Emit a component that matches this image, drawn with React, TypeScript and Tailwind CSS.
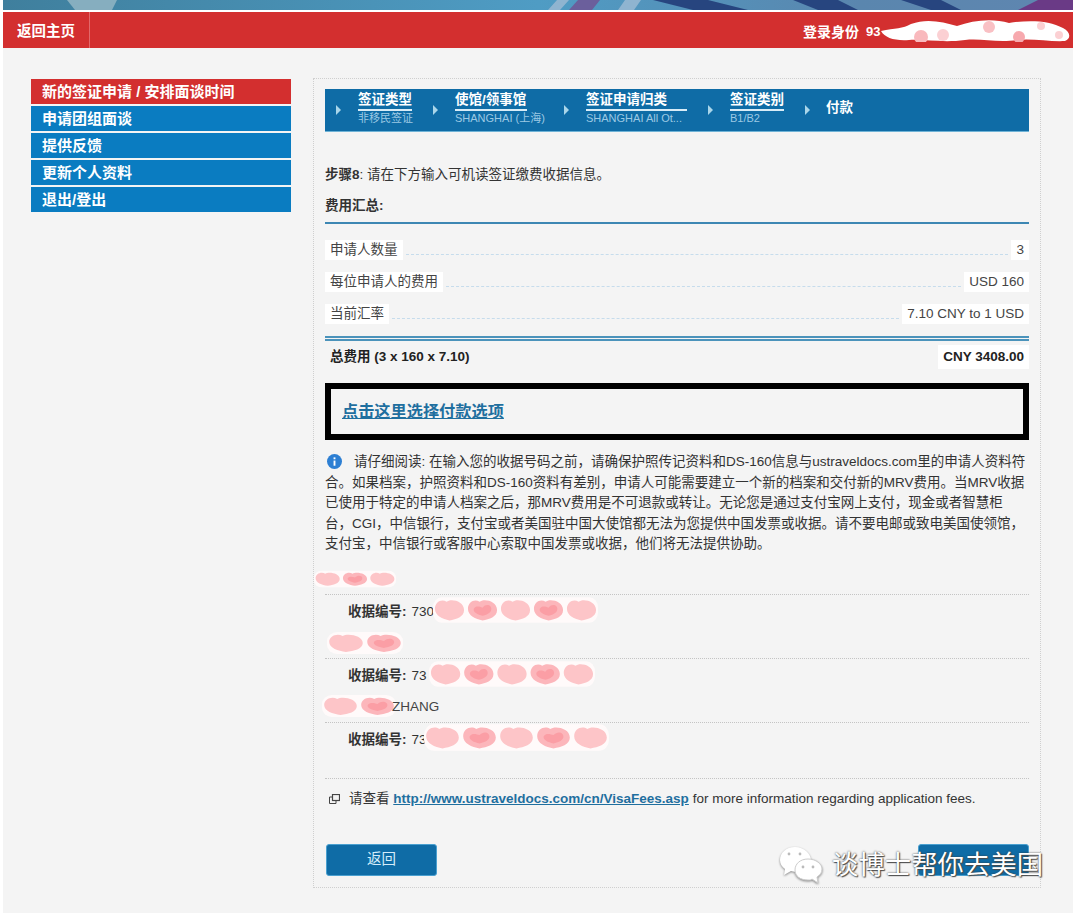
import type { ReactNode } from "react";

const CJK = "font-['Liberation_Sans','Noto_Sans_CJK_SC',sans-serif]";

const MENU = ["新的签证申请 / 安排面谈时间", "申请团组面谈", "提供反馈", "更新个人资料", "退出/登出"];

const STEPS = [
  { title: "签证类型", sub: "非移民签证", w: "w-[54px]", line: "w-[54px]" },
  { title: "使馆/领事馆", sub: "SHANGHAI (上海)", w: "w-[88px]", line: "w-[72px]" },
  { title: "签证申请归类", sub: "SHANGHAI All Ot...", w: "w-[101px]", line: "w-[101px]" },
  { title: "签证类别", sub: "B1/B2", w: "w-[54px]", line: "w-[54px]" },
];

const FEES = [
  { label: "申请人数量", value: "3" },
  { label: "每位申请人的费用", value: "USD 160" },
  { label: "当前汇率", value: "7.10 CNY to 1 USD" },
];

// pink heart blobs smeared over the private bits of the screenshot
function Hearts({ className, count }: { className: string; count: number }) {
  const step = 34;
  return (
    <svg className={className} viewBox={`0 0 ${count * step} 24`} preserveAspectRatio="none" aria-hidden>
      <rect x="0" y="1" width={count * step} height="22" rx="9" fill="#fffafa" />
      {Array.from({ length: count }).map((_, i) => (
        <g key={i} transform={`translate(${i * step + 2} 2)`}>
          <path
            d="M15 19 C8 18 0 15 0 9 C0 3 7 0 12 3 C16 0 30 2 30 10 C30 16 22 18 15 19Z"
            fill={i % 2 ? "#fcb6bb" : "#fdc5c8"}
          />
          {i % 2 === 1 && <path d="M15 15 C10 14 5 12 6 9 C8 6 12 7 15 8 C19 4 25 6 24 10 C23 13 19 14 15 15Z" fill="#fb9ea5" />}
        </g>
      ))}
    </svg>
  );
}

// the one in the red bar is mostly white with a few pink spots
function WhiteSmear({ className }: { className: string }) {
  return (
    <svg className={className} viewBox="0 0 190 24" aria-hidden>
      <path d="M0 13 C14 10 22 11 30 6 C46 0 62 4 76 8 C92 2 112 0 128 5 C146 2 168 2 182 10 C190 14 190 21 184 23 C170 24 150 20 136 22 C116 25 100 20 84 22 C62 25 44 21 28 22 C14 23 4 20 0 13Z" fill="#fff" />
      <circle cx="40" cy="19" r="7" fill="#f9b9bd" />
      <circle cx="62" cy="17" r="6" fill="#fbd0d3" />
      <circle cx="108" cy="9" r="6" fill="#f9c0c4" />
      <circle cx="138" cy="19" r="6" fill="#f7a9ae" />
      <circle cx="160" cy="8" r="4" fill="#fbd0d3" />
      <circle cx="178" cy="17" r="4" fill="#fbd0d3" />
    </svg>
  );
}

function Arrow() {
  return <span className="h-0 w-0 shrink-0 border-y-[5px] border-l-[5px] border-y-transparent border-l-[#a9d6ea]" />;
}

function FeeRow({ label, value }: { label: string; value: string }) {
  return (
    <div className="flex h-[32px] items-center">
      <span className="bg-white px-[5px] py-[2px] text-[13.5px] leading-[16px] text-[#444]">{label}</span>
      <span className="mx-[3px] mt-[8px] flex-1 border-b border-dashed border-[#c6dcec]" />
      <span className="bg-white px-[5px] py-[2px] text-[13.5px] leading-[16px] text-[#444]">{value}</span>
    </div>
  );
}

function Receipt({ name, digits, blob }: { name: ReactNode; digits: string; blob: string }) {
  return (
    <div>
      <div className="relative h-[26px] border-b border-dotted border-[#c4c4c4]">{name}</div>
      <div className="relative flex h-[38px] items-center pb-[3px] pl-[23px] text-[13.5px] text-[#333]">
        <span className="font-bold">收据编号:</span>
        <span className="ml-[5px]">{digits}</span>
        <Hearts className={blob} count={5} />
      </div>
    </div>
  );
}

function Banner() {
  return (
    <svg className="block h-[10px] w-[1070px]" viewBox="0 0 1070 10" preserveAspectRatio="none" aria-hidden>
      <defs>
        <linearGradient id="sky" x1="0" x2="1" y1="0" y2="0">
          <stop offset="0" stopColor="#3f7f9d" />
          <stop offset="0.5" stopColor="#4f9cc4" />
          <stop offset="0.8" stopColor="#5a86ae" />
          <stop offset="1" stopColor="#5f86b0" />
        </linearGradient>
      </defs>
      <rect width="1070" height="10" fill="url(#sky)" />
      <path d="M64 0h50l-5 10H72Z" fill="#86aebf" />
      <path d="M545 10l9-10h12l-9 10ZM615 10l7-10h16l-7 10Z" fill="#8fb4d0" />
      <path d="M566 10l9-10h22l-8 10Z" fill="#6b5f9c" />
      <path d="M650 0h55l40 10h-55ZM790 0h45l20 10h-40ZM898 0h40l20 10h-30Z" fill="#27457f" />
      <path d="M1015 10l20-10h35v10Z" fill="#6a3a86" />
    </svg>
  );
}

export default function App() {
  return (
    <div className={`${CJK} h-[913px] overflow-hidden bg-white`}>
      <div className="pl-[3px]">
        <Banner />
      </div>
      <div className="ml-[3px] mr-[7px] mt-[2px] flex h-[36px] items-center bg-[#d32f2f] text-white">
        <div className="flex h-full w-[87px] items-center border-r border-[#e2686a] pl-[14px] pt-[4px] text-[14.5px] font-bold">返回主页</div>
        <div className="relative ml-auto mt-[4px] flex w-[270px] items-center text-[14px] font-bold">
          <span>登录身份</span>
          <span className="ml-[7px] text-[13px]">93</span>
          <WhiteSmear className="absolute left-[78px] top-[-4px] h-[24px] w-[190px]" />
        </div>
      </div>

      <div className="ml-[3px] mr-[7px] flex h-[865px] items-start bg-[#f4f4f4] pl-[28px] pt-[30px]">
        <nav className="flex w-[260px] flex-col gap-[2px] pt-[1px]">
          {MENU.map((item, i) => (
            <div
              key={item}
              className={`flex h-[25px] items-center pl-[11px] pt-[2px] text-[15px] font-bold text-white ${i === 0 ? "bg-[#d32f2f]" : "bg-[#0a7cc1]"}`}
            >
              {item}
            </div>
          ))}
        </nav>

        <main className="ml-[22px] h-[810px] w-[728px] border border-dotted border-[#cfcfcf] px-[11px] pt-[10px]">
          <div className="flex h-[43px] items-center border-b border-[#6fb3d6] bg-[#0f6ca6] pl-[11px] text-white">
            {STEPS.map((s) => (
              <div key={s.title} className="flex items-center">
                <Arrow />
                <div className={`ml-[17px] mr-[21px] pb-[3px] ${s.w}`}>
                  <div className={`border-b-2 border-[#d8ecf7] pb-[1px] text-[13.5px] font-bold leading-[16px] whitespace-nowrap ${s.line}`}>{s.title}</div>
                  <div className="mt-[1px] whitespace-nowrap text-[11px] leading-[13px] text-[#9cc9e4]">{s.sub}</div>
                </div>
              </div>
            ))}
            <Arrow />
            <span className="mb-[3px] ml-[16px] text-[13.5px] font-bold">付款</span>
          </div>

          <p className="mt-[34px] text-[13.5px] leading-[18px] text-[#333]">
            <b>步骤8</b>: 请在下方输入可机读签证缴费收据信息。
          </p>
          <p className="mt-[13px] text-[13.5px] font-bold leading-[18px] text-[#333]">费用汇总:</p>
          <div className="mt-[7px] border-t-2 border-[#3d87b3] pt-[10px]">
            {FEES.map((f) => (
              <FeeRow key={f.label} label={f.label} value={f.value} />
            ))}
          </div>
          <div className="mt-[6px] h-[5px] border-y-2 border-[#4b93bb]" />
          <div className="mt-[5px] flex h-[22px] items-center justify-between text-[13.5px] font-bold text-[#222]">
            <span className="px-[5px]">总费用 (3 x 160 x 7.10)</span>
            <span className="bg-white px-[5px] py-[2px]">CNY 3408.00</span>
          </div>

          <div className="mt-[15px] flex h-[57px] items-center border-[6px] border-black pl-[11px]">
            <a className="text-[16.2px] font-bold text-[#1f6f9f] underline">点击这里选择付款选项</a>
          </div>

          <p className="mt-[12px] text-[13.5px] leading-[20.5px] text-[#333]">
            <svg className="mb-[2px] ml-[2px] mr-[12px] inline-block h-[15px] w-[15px]" viewBox="0 0 16 16" aria-hidden>
              <circle cx="8" cy="8" r="8" fill="#2d7fd3" />
              <rect x="7" y="7" width="2" height="5.5" fill="#fff" />
              <rect x="7" y="3.6" width="2" height="2" fill="#fff" />
            </svg>
            请仔细阅读: 在输入您的收据号码之前，请确保护照传记资料和DS-160信息与ustraveldocs.com里的申请人资料符合。如果档案，护照资料和DS-160资料有差别，申请人可能需要建立一个新的档案和交付新的MRV费用。当MRV收据已使用于特定的申请人档案之后，那MRV费用是不可退款或转让。无论您是通过支付宝网上支付，现金或者智慧柜台，CGI，中信银行，支付宝或者美国驻中国大使馆都无法为您提供中国发票或收据。请不要电邮或致电美国使领馆，支付宝，中信银行或客服中心索取中国发票或收据，他们将无法提供协助。
          </p>

          <div className="mt-[14px]">
            <Receipt
              name={<Hearts className="absolute left-[-11px] top-[1px] h-[18px] w-[82px]" count={3} />}
              digits="730"
              blob="absolute left-[108px] top-[1px] h-[28px] w-[165px]"
            />
            <Receipt
              name={<Hearts className="absolute left-[2px] top-[-2px] h-[24px] w-[76px]" count={2} />}
              digits="73"
              blob="absolute left-[104px] top-[1px] h-[28px] w-[166px]"
            />
            <Receipt
              name={
                <>
                  <Hearts className="absolute left-[-3px] top-[-3px] h-[24px] w-[74px]" count={2} />
                  <span className="absolute left-[67px] top-0 text-[13.5px] text-[#444]">ZHANG</span>
                </>
              }
              digits="73"
              blob="absolute left-[99px] top-[0px] h-[29px] w-[185px]"
            />
          </div>

          <div className="h-[18px] border-b border-dotted border-[#c4c4c4]" />
          <p className="mt-[10px] flex items-center whitespace-nowrap text-[13.5px] text-[#333]">
            <svg className="ml-[4px] mr-[9px] h-[10px] w-[11px]" viewBox="0 0 11 10" fill="none" stroke="#444" aria-hidden>
              <rect x="3.5" y="0.5" width="7" height="6" strokeWidth="1.2" />
              <path d="M3 3H.5v6.5h6.5V7" />
            </svg>
            <span>请查看&nbsp;</span>
            <a className="font-bold text-[#1f6f9f] underline">http://www.ustraveldocs.com/cn/VisaFees.asp</a>
            <span>&nbsp;for more information regarding application fees.</span>
          </p>

          <div className="mt-[35px] flex justify-between pl-[1px]">
            <button className="h-[32px] w-[111px] rounded-[3px] border border-[#4aa0d0] bg-[#0f6ca6] text-[14.5px] text-[#d5ecfa]">返回</button>
            <button className="h-[32px] w-[111px] rounded-[3px] border border-[#4aa0d0] bg-[#0f6ca6]" />
          </div>
        </main>
      </div>

      {/* WeChat watermark sits on top of the page */}
      <div className="absolute left-[778px] top-[846px] flex items-center">
        <svg className="h-[38px] w-[46px] drop-shadow-[0_1px_1px_rgba(0,0,0,0.45)]" viewBox="0 0 46 38" aria-hidden>
          <path d="M17 1C8 1 2 7 2 14c0 4 2 7 5 9l-1 6 7-4c1 0 3 1 5 1 9 0 15-6 15-12S26 1 17 1Z" fill="#fff" />
          <path d="M30 13c-8 0-13 5-13 11s5 10 13 10c2 0 3 0 4-1l6 4-1-6c3-2 5-4 5-8 0-5-6-10-14-10Z" fill="#fff" stroke="#ccc" />
          <circle cx="11" cy="8" r="1.4" fill="#bbb" />
          <circle cx="22" cy="8" r="1.4" fill="#bbb" />
          <circle cx="25" cy="21" r="1.4" fill="#bbb" />
          <circle cx="35" cy="21" r="1.4" fill="#bbb" />
        </svg>
        <span className="ml-[8px] whitespace-nowrap text-[26.4px] leading-none text-white [text-shadow:0_0_2px_#333,1px_1px_1px_#555]">谈博士帮你去美国</span>
      </div>
    </div>
  );
}
